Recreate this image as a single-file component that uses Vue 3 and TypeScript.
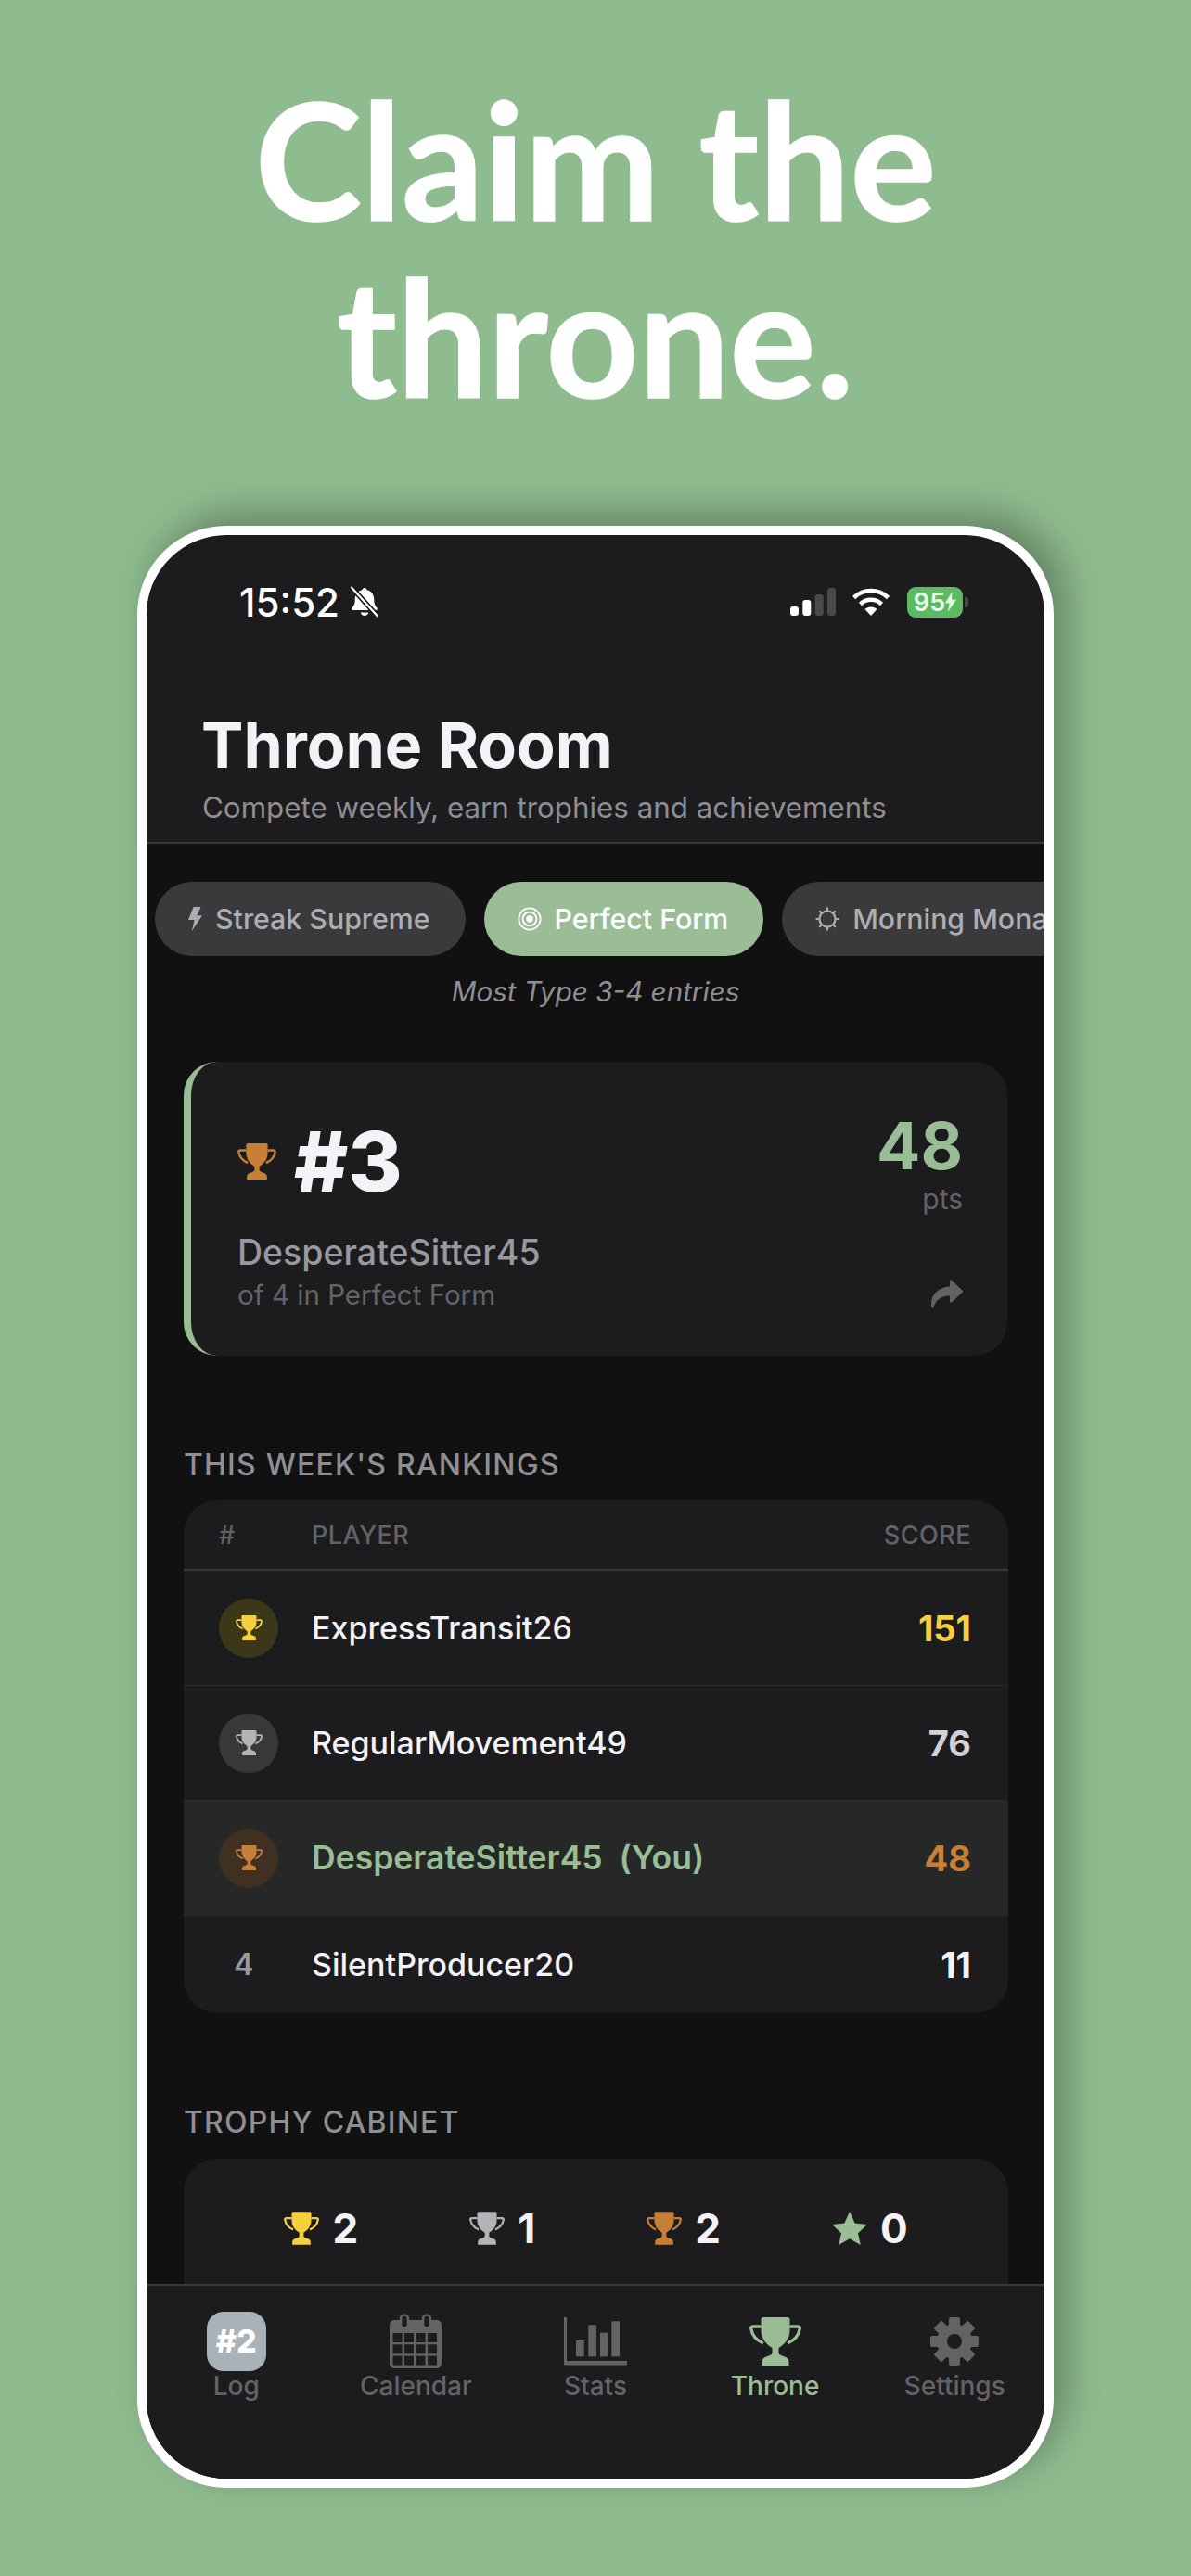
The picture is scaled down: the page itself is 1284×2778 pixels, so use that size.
<template>
  <div class="page">
    <h1 class="headline">Claim the<br />throne.</h1>

    <svg width="0" height="0" class="defs">
      <symbol id="trophy" viewBox="0 0 56 52">
        <path fill="currentColor" d="M15 0h26c1.500 0 2.500 1 2.500 2.500V14c0 10-7 16-12 19v5c0 2 2 3 5 4 4 1 6 3 6 6v4H13.500v-4c0-3 2-5 6-6 3-1 5-2 5-4v-5c-5-3-12-9-12-19V2.500C12.500 1 13.500 0 15 0z" />
        <path fill="none" stroke="currentColor" stroke-width="3.400" d="M12.500 10H4c-1.500 0-2.500 1-2.200 2.500 1 6 5 12 13 15.500M43.500 10H52c1.500 0 2.500 1 2.200 2.500-1 6-5 12-13 15.500" />
      </symbol>
    </svg>

    <div class="phone">
      <div class="statusbar">
        <div class="status-left">
          <span class="time">15:52</span>
          <svg class="bell" viewBox="0 0 34 34" fill="none">
            <path fill="#fff" d="M17 2c1.400 0 2.400 1 2.500 2.200 5 1.100 7.800 5.200 7.800 10.300 0 4.800 1.200 7 3.200 9.200.8.900.3 2.300-1 2.300H4.500c-1.300 0-1.800-1.400-1-2.300 2-2.200 3.200-4.400 3.200-9.200 0-5.100 2.800-9.200 7.800-10.300C14.600 3 15.600 2 17 2zM12.800 28.500h8.400c-.3 2.100-2.100 3.500-4.200 3.500s-3.900-1.400-4.200-3.500z" />
            <path stroke="#1c1c1e" stroke-width="5.500" d="M3 1.500l28 31" />
            <path stroke="#fff" stroke-width="2.200" stroke-linecap="round" d="M3 1.500l28 31" />
          </svg>
        </div>
        <div class="status-right">
          <svg class="signal" viewBox="0 0 49 30">
            <rect x="0" y="20" width="9" height="10" rx="3" fill="#fff" />
            <rect x="13.300" y="13" width="9" height="17" rx="3" fill="#fff" />
            <rect x="26.700" y="7" width="9" height="23" rx="3" fill="#4a4a4c" />
            <rect x="40" y="0" width="9" height="30" rx="3" fill="#4a4a4c" />
          </svg>
          <svg class="wifi" viewBox="0 0 42 30" fill="none" stroke="#fff" stroke-width="4.600">
            <path d="M2.500 10.500C7.500 5.700 14 3 21 3s13.500 2.700 18.500 7.500" />
            <path d="M9.500 17.500C12.600 14.500 16.600 12.800 21 12.800s8.400 1.700 11.500 4.700" />
            <path fill="#fff" stroke="none" d="M14.500 23c1.700-1.500 4-2.400 6.500-2.400s4.800.9 6.500 2.400L21 30z" />
          </svg>
          <div class="battery">
            <span class="battery-body">95<svg class="bolt" viewBox="0 0 12 22"><path fill="#e4f5e4" d="M7.500 0L0 12.500h4.500L3 22l9-13.500H7z" /></svg></span>
            <span class="battery-cap"></span>
          </div>
        </div>
      </div>

      <header class="room-head">
        <h2>Throne Room</h2>
        <p>Compete weekly, earn trophies and achievements</p>
      </header>

      <main class="scroll">
        <div class="chips">
          <div class="chip">
            <svg class="chip-icon bolt-icon" viewBox="0 0 16 28"><path fill="currentColor" d="M6 0h8.500L10 10h6L4 28l3-13H0z" /></svg>
            Streak Supreme
          </div>
          <div class="chip active">
            <svg class="chip-icon" viewBox="0 0 28 28" fill="none" stroke="currentColor" stroke-width="2">
              <circle cx="14" cy="14" r="12.500" />
              <circle cx="14" cy="14" r="8" />
              <circle cx="14" cy="14" r="4" fill="currentColor" stroke="none" />
            </svg>
            Perfect Form
          </div>
          <div class="chip">
            <svg class="chip-icon" viewBox="0 0 28 28" fill="none" stroke="currentColor" stroke-width="2.400">
              <circle cx="14" cy="14" r="9.200" />
              <path stroke-linecap="round" d="M14 1.500v2M14 24.500v2M1.500 14h2M24.500 14h2M5.200 5.200l1.400 1.400M21.400 21.400l1.400 1.400M5.200 22.800l1.400-1.400M21.400 6.600l1.400-1.400" />
            </svg>
            Morning Monarch
          </div>
        </div>
        <p class="chip-note">Most Type 3-4 entries</p>

        <section class="hero">
          <div class="hero-top">
            <div class="hero-rank">
              <svg class="hero-trophy"><use href="#trophy" /></svg>
              <span>#3</span>
            </div>
            <div class="hero-score">
              <strong>48</strong>
              <span>pts</span>
            </div>
          </div>
          <div class="hero-bottom">
            <div>
              <div class="hero-name">DesperateSitter45</div>
              <div class="hero-of">of 4 in Perfect Form</div>
            </div>
            <svg class="share" viewBox="0 0 35 31"><path fill="currentColor" d="M21 1c.5-.9 1.300-1 2-.4l11.300 10.800c.8.800.8 1.700 0 2.500L23 24.400c-.7.600-1.500.5-2-.4v-6.500C12 17.500 6.500 21 3.500 29.500c-.5 1.500-2 1.500-2.300 0C-.5 18 7 8 21 7.500z" /></svg>
          </div>
        </section>

        <h3 class="section-title">THIS WEEK'S RANKINGS</h3>
        <section class="table">
          <div class="table-head">
            <span class="col-rank">#</span>
            <span class="col-player">PLAYER</span>
            <span>SCORE</span>
          </div>
          <div
            v-for="row in rows"
            :key="row.name"
            class="table-row"
            :class="[row.medal, { me: row.me, plain: !row.medal }]"
          >
            <div class="col-rank">
              <span v-if="row.medal" class="badge"><svg><use href="#trophy" /></svg></span>
              <span v-else class="rank-num">{{ row.rank }}</span>
            </div>
            <span class="col-player name">{{ row.name }}</span>
            <span class="score">{{ row.score }}</span>
          </div>
        </section>

        <h3 class="section-title cabinet-title">TROPHY CABINET</h3>
        <section class="cabinet">
          <div v-for="item in cabinet" :key="item.medal" class="cabinet-item" :class="item.medal">
            <svg v-if="item.medal !== 'star'"><use href="#trophy" /></svg>
            <svg v-else viewBox="0 0 38 36"><path fill="currentColor" d="M19 0l5.600 12.500L38 14l-10 9.300L30.800 36 19 29.300 7.200 36 10 23.300 0 14l13.400-1.500z" /></svg>
            <span>{{ item.count }}</span>
          </div>
        </section>
      </main>

      <nav class="tabbar">
        <div class="tab">
          <span class="log-badge">#2</span>
          <span>Log</span>
        </div>
        <div class="tab">
          <svg class="calendar" viewBox="0 0 56 59">
            <rect x="0" y="7" width="56" height="52" rx="5" fill="currentColor" />
            <rect v-for="c in calendarCells" :key="c.id" :x="c.x" :y="c.y" width="10" height="10" fill="#1c1c1e" />
            <rect x="12" y="1.500" width="8" height="14" rx="4" fill="#1c1c1e" stroke="currentColor" stroke-width="2.600" />
            <rect x="36" y="1.500" width="8" height="14" rx="4" fill="#1c1c1e" stroke="currentColor" stroke-width="2.600" />
          </svg>
          <span>Calendar</span>
        </div>
        <div class="tab">
          <svg class="stats" viewBox="0 0 68 52" fill="currentColor">
            <path d="M0 0h3v47h65v4.500H0z" />
            <rect x="13" y="25" width="8.700" height="17.300" />
            <rect x="26.300" y="8.300" width="8.700" height="34" />
            <rect x="39" y="16.700" width="8.700" height="25.600" />
            <rect x="51.300" y="4.300" width="8.700" height="38" />
          </svg>
          <span>Stats</span>
        </div>
        <div class="tab active">
          <svg class="throne"><use href="#trophy" /></svg>
          <span>Throne</span>
        </div>
        <div class="tab">
          <svg class="gear" viewBox="-26 -26 52 52" fill="currentColor">
            <circle r="13.500" fill="none" stroke="currentColor" stroke-width="11" />
            <rect
              v-for="angle in gearTeeth"
              :key="angle"
              x="-6"
              y="-26"
              width="12"
              height="10"
              rx="2"
              :transform="`rotate(${angle})`"
            />
          </svg>
          <span>Settings</span>
        </div>
      </nav>
    </div>
  </div>
</template>

<script setup lang="ts">
interface Row {
  rank: number
  name: string
  score: number
  medal?: 'gold' | 'silver' | 'bronze'
  me?: boolean
}

const rows: Row[] = [
  { rank: 1, name: 'ExpressTransit26', score: 151, medal: 'gold' },
  { rank: 2, name: 'RegularMovement49', score: 76, medal: 'silver' },
  { rank: 3, name: 'DesperateSitter45\u00a0 (You)', score: 48, medal: 'bronze', me: true },
  { rank: 4, name: 'SilentProducer20', score: 11 }
]

const cabinet = [
  { medal: 'gold', count: 2 },
  { medal: 'silver', count: 1 },
  { medal: 'bronze', count: 2 },
  { medal: 'star', count: 0 }
]

const calendarCells: { id: string; x: number; y: number }[] = []
for (let r = 0; r < 3; r++) {
  for (let c = 0; c < 4; c++) {
    calendarCells.push({ id: `${r}-${c}`, x: 3.500 + c * 12.500, y: 21 + r * 12.300 })
  }
}

const gearTeeth = [0, 45, 90, 135, 180, 225, 270, 315]
</script>

<style>
html,
body {
  margin: 0;
  background: #8fbc8f;
}
</style>

<style scoped>
.page {
  height: 2778px;
  overflow: hidden;
  box-sizing: border-box;
  padding-top: 75px;
  background: #8fbc8f;
  font-family: Inter, 'Liberation Sans', sans-serif;
}

.defs {
  position: absolute;
}

.headline {
  margin: 0;
  height: 492px;
  font-family: Lato, 'Open Sans', sans-serif;
  font-size: 174px;
  line-height: 191px;
  font-weight: 700;
  text-align: center;
  color: #fff;
  -webkit-text-stroke: 1.500px #fff;
}

.phone {
  box-sizing: border-box;
  width: 988px;
  height: 2116px;
  margin: 0 auto;
  border: 10px solid #fff;
  border-radius: 96px;
  background: #1c1c1e;
  box-shadow: 14px -14px 40px rgba(0, 0, 0, 0.3);
  overflow: hidden;
  display: flex;
  flex-direction: column;
}

.statusbar {
  height: 118px;
  flex-shrink: 0;
  padding: 26px 82px 0 100px;
  display: flex;
  align-items: center;
  justify-content: space-between;
  box-sizing: border-box;
}

.status-left,
.status-right {
  display: flex;
  align-items: center;
}

.time {
  font-size: 42px;
  font-weight: 500;
  color: #fff;
}

.bell {
  width: 34px;
  height: 34px;
  margin-left: 10px;
}

.signal {
  width: 49px;
  height: 30px;
}

.wifi {
  width: 42px;
  height: 30px;
  margin-left: 17px;
}

.battery {
  display: flex;
  align-items: center;
  margin-left: 18px;
}

.battery-body {
  width: 60px;
  height: 33px;
  border-radius: 9px;
  background: #5cbb62;
  color: #e8f7e8;
  font-size: 27px;
  font-weight: 600;
  display: flex;
  align-items: center;
  justify-content: center;
}

.bolt {
  width: 12px;
  height: 22px;
}

.battery-cap {
  width: 4px;
  height: 11px;
  border-radius: 0 3px 3px 0;
  background: #4a4a4c;
  margin-left: 2px;
}

.room-head {
  flex-shrink: 0;
  height: 215px;
  box-sizing: border-box;
  padding: 69px 60px 0;
  border-bottom: 2px solid #38383a;
}

.room-head h2 {
  margin: 0 0 0 -1px;
  font-size: 68px;
  line-height: 78px;
  font-weight: 700;
  color: #f2f2f7;
}

.room-head p {
  margin: 10px 0 0;
  font-size: 31.300px;
  line-height: 38px;
  color: #8e8e93;
}

.scroll {
  flex: 1;
  min-height: 0;
  overflow: hidden;
  background: #111112;
}

.chips {
  display: flex;
  gap: 20px;
  margin-top: 41px;
  padding-left: 9px;
  overflow: hidden;
}

.chip {
  flex-shrink: 0;
  height: 80px;
  padding: 0 38px 0 36px;
  box-sizing: border-box;
  border-radius: 40px;
  background: #3a3a3c;
  color: #aeaeb2;
  font-size: 30.300px;
  font-weight: 500;
  display: flex;
  align-items: center;
  gap: 14px;
}

.chip.active {
  background: #9abd96;
  color: #fff;
}

.chip-icon {
  width: 26px;
  height: 28px;
}

.bolt-icon {
  width: 15px;
}

.chip-note {
  margin: 20px 0 0;
  font-size: 29.600px;
  line-height: 36px;
  font-style: italic;
  text-align: center;
  color: #8e8e93;
}

.hero {
  box-sizing: border-box;
  height: 317px;
  margin: 58px 40px 0;
  padding: 52px 48px 0 50px;
  border-left: 8px solid #9abd96;
  border-radius: 36px;
  background: #1c1c1e;
}

.hero-top,
.hero-bottom {
  display: flex;
  justify-content: space-between;
}

.hero-top {
  height: 132px;
}

.hero-rank {
  display: flex;
  align-items: center;
  height: 110px;
  gap: 19px;
  font-size: 89px;
  font-weight: 800;
  color: #f2f2f7;
}

.hero-trophy {
  width: 42px;
  height: 39px;
  color: #c77f38;
}

.hero-score {
  display: flex;
  flex-direction: column;
  align-items: flex-end;
  margin-top: 1px;
}

.hero-score strong {
  font-size: 70px;
  line-height: 76px;
  font-weight: 700;
  color: #9abd96;
}

.hero-score span {
  margin-top: 2px;
  font-size: 30px;
  line-height: 34px;
  color: #636366;
}

.hero-bottom {
  align-items: flex-end;
}

.hero-name {
  font-size: 37.500px;
  line-height: 44px;
  font-weight: 500;
  color: #98989e;
}

.hero-of {
  margin-top: 6px;
  font-size: 29.500px;
  line-height: 34px;
  color: #636366;
}

.share {
  width: 35px;
  height: 31px;
  color: #636366;
  margin-bottom: 2px;
}

.section-title {
  margin: 100px 40px 0;
  font-size: 32px;
  line-height: 36px;
  font-weight: 500;
  letter-spacing: 1.200px;
  color: #8e8e93;
}

.table {
  margin: 20px 39px 0 40px;
  border-radius: 36px;
  background: #1c1c1e;
  overflow: hidden;
}

.table-head {
  height: 76px;
  box-sizing: border-box;
  padding: 0 40px 0 38px;
  border-bottom: 2px solid #38383a;
  display: flex;
  align-items: center;
  font-size: 27px;
  font-weight: 500;
  letter-spacing: 0.500px;
  color: #636366;
}

.col-rank {
  width: 100px;
  flex-shrink: 0;
}

.col-player {
  flex: 1;
}

.table-row {
  height: 124px;
  box-sizing: border-box;
  padding: 0 40px 0 38px;
  border-bottom: 1px solid #2a2a2c;
  display: flex;
  align-items: center;
  color: #f2f2f7;
}

.table-row.plain {
  height: 105px;
  border-bottom: 0;
}

.table-row.me {
  background: #252826;
}

.badge {
  width: 64px;
  height: 64px;
  border-radius: 50%;
  display: flex;
  align-items: center;
  justify-content: center;
}

.badge svg {
  width: 29px;
  height: 27px;
}

.gold {
  color: #f5cf3e;
}

.silver {
  color: #b3b3b8;
}

.bronze {
  color: #c77f38;
}

.star {
  color: #9abd96;
}

.gold .badge {
  background: #3c3718;
}

.silver .badge {
  background: #38383a;
}

.bronze .badge {
  background: #3f3022;
}

.name {
  font-size: 34px;
  font-weight: 500;
  color: #f2f2f7;
}

.me .name {
  font-size: 35.500px;
  font-weight: 600;
  color: #9abd96;
}

.score {
  font-size: 38px;
  font-weight: 700;
}

.silver .score {
  color: #d1d1d6;
}

.plain .score {
  color: #f2f2f7;
}

.rank-num {
  display: block;
  margin-left: 16px;
  font-size: 32px;
  font-weight: 600;
  color: #98989e;
}

.cabinet-title {
  margin-top: 100px;
}

.cabinet {
  margin: 21px 39px 0 40px;
  height: 240px;
  padding-top: 57px;
  box-sizing: border-box;
  border-radius: 36px;
  background: #1c1c1e;
  display: flex;
  justify-content: center;
  align-items: flex-start;
  gap: 120px;
}

.cabinet-item {
  display: flex;
  align-items: center;
  gap: 14px;
}

.cabinet-item svg {
  width: 38px;
  height: 36px;
}

.cabinet-item span {
  font-size: 44px;
  line-height: 36px;
  font-weight: 700;
  color: #f2f2f7;
}

.tabbar {
  flex-shrink: 0;
  height: 210px;
  box-sizing: border-box;
  border-top: 2px solid #38383a;
  padding-top: 28px;
  background: #1c1c1e;
  display: grid;
  grid-template-columns: repeat(5, 1fr);
  align-items: start;
}

.tab {
  display: flex;
  flex-direction: column;
  align-items: center;
  font-size: 28px;
  line-height: 32px;
  font-weight: 500;
  color: #636366;
}

.tab.active {
  color: #9abd96;
}

.calendar {
  width: 56px;
  height: 59px;
  margin: 2px 0 3px;
}

.stats {
  width: 68px;
  height: 52px;
  margin: 6px 0;
}

.throne {
  width: 56px;
  height: 52px;
  margin: 6px 0;
}

.gear {
  width: 52px;
  height: 52px;
  margin: 6px 0;
}

.log-badge {
  width: 64px;
  height: 64px;
  border-radius: 18px;
  background: #a9b2b8;
  color: #fff;
  font-size: 34px;
  font-weight: 800;
  line-height: 64px;
  text-align: center;
}
</style>
